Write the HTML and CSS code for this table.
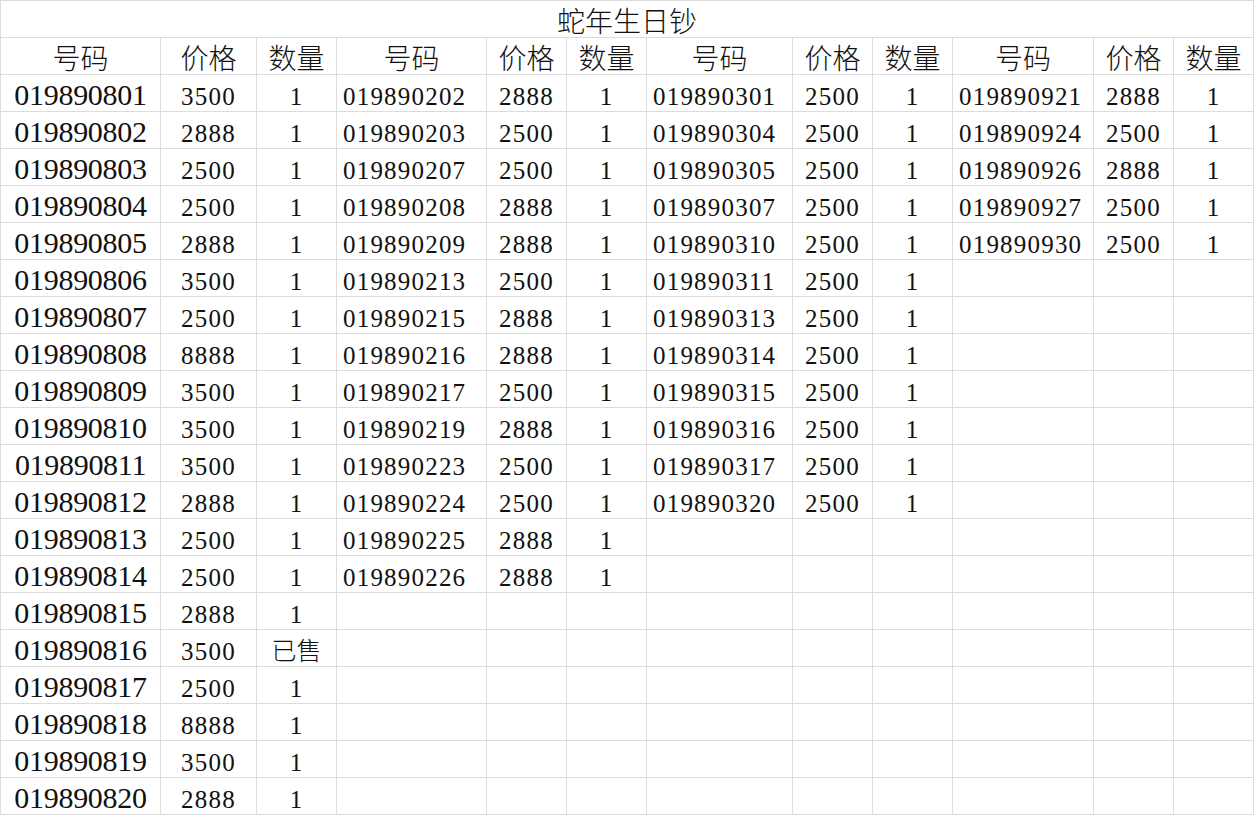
FILE: index.html
```html
<!DOCTYPE html>
<html lang="zh-CN">
<head>
<meta charset="utf-8">
<title>蛇年生日钞</title>
<link rel="stylesheet" href="styles.css">
</head>
<body>
<div class="sheet">
  <div class="title">蛇年生日钞</div>

  <div class="c h">号码</div><div class="c h">价格</div><div class="c h">数量</div>
  <div class="c h">号码</div><div class="c h">价格</div><div class="c h">数量</div>
  <div class="c h">号码</div><div class="c h">价格</div><div class="c h">数量</div>
  <div class="c h">号码</div><div class="c h">价格</div><div class="c h">数量</div>

  <div class="c k1">019890801</div><div class="c v">3500</div><div class="c v">1</div>
  <div class="c k">019890202</div><div class="c v">2888</div><div class="c v">1</div>
  <div class="c k">019890301</div><div class="c v">2500</div><div class="c v">1</div>
  <div class="c k">019890921</div><div class="c v">2888</div><div class="c v">1</div>

  <div class="c k1">019890802</div><div class="c v">2888</div><div class="c v">1</div>
  <div class="c k">019890203</div><div class="c v">2500</div><div class="c v">1</div>
  <div class="c k">019890304</div><div class="c v">2500</div><div class="c v">1</div>
  <div class="c k">019890924</div><div class="c v">2500</div><div class="c v">1</div>

  <div class="c k1">019890803</div><div class="c v">2500</div><div class="c v">1</div>
  <div class="c k">019890207</div><div class="c v">2500</div><div class="c v">1</div>
  <div class="c k">019890305</div><div class="c v">2500</div><div class="c v">1</div>
  <div class="c k">019890926</div><div class="c v">2888</div><div class="c v">1</div>

  <div class="c k1">019890804</div><div class="c v">2500</div><div class="c v">1</div>
  <div class="c k">019890208</div><div class="c v">2888</div><div class="c v">1</div>
  <div class="c k">019890307</div><div class="c v">2500</div><div class="c v">1</div>
  <div class="c k">019890927</div><div class="c v">2500</div><div class="c v">1</div>

  <div class="c k1">019890805</div><div class="c v">2888</div><div class="c v">1</div>
  <div class="c k">019890209</div><div class="c v">2888</div><div class="c v">1</div>
  <div class="c k">019890310</div><div class="c v">2500</div><div class="c v">1</div>
  <div class="c k">019890930</div><div class="c v">2500</div><div class="c v">1</div>

  <div class="c k1">019890806</div><div class="c v">3500</div><div class="c v">1</div>
  <div class="c k">019890213</div><div class="c v">2500</div><div class="c v">1</div>
  <div class="c k">019890311</div><div class="c v">2500</div><div class="c v">1</div>
  <div class="c"></div><div class="c"></div><div class="c"></div>

  <div class="c k1">019890807</div><div class="c v">2500</div><div class="c v">1</div>
  <div class="c k">019890215</div><div class="c v">2888</div><div class="c v">1</div>
  <div class="c k">019890313</div><div class="c v">2500</div><div class="c v">1</div>
  <div class="c"></div><div class="c"></div><div class="c"></div>

  <div class="c k1">019890808</div><div class="c v">8888</div><div class="c v">1</div>
  <div class="c k">019890216</div><div class="c v">2888</div><div class="c v">1</div>
  <div class="c k">019890314</div><div class="c v">2500</div><div class="c v">1</div>
  <div class="c"></div><div class="c"></div><div class="c"></div>

  <div class="c k1">019890809</div><div class="c v">3500</div><div class="c v">1</div>
  <div class="c k">019890217</div><div class="c v">2500</div><div class="c v">1</div>
  <div class="c k">019890315</div><div class="c v">2500</div><div class="c v">1</div>
  <div class="c"></div><div class="c"></div><div class="c"></div>

  <div class="c k1">019890810</div><div class="c v">3500</div><div class="c v">1</div>
  <div class="c k">019890219</div><div class="c v">2888</div><div class="c v">1</div>
  <div class="c k">019890316</div><div class="c v">2500</div><div class="c v">1</div>
  <div class="c"></div><div class="c"></div><div class="c"></div>

  <div class="c k1">019890811</div><div class="c v">3500</div><div class="c v">1</div>
  <div class="c k">019890223</div><div class="c v">2500</div><div class="c v">1</div>
  <div class="c k">019890317</div><div class="c v">2500</div><div class="c v">1</div>
  <div class="c"></div><div class="c"></div><div class="c"></div>

  <div class="c k1">019890812</div><div class="c v">2888</div><div class="c v">1</div>
  <div class="c k">019890224</div><div class="c v">2500</div><div class="c v">1</div>
  <div class="c k">019890320</div><div class="c v">2500</div><div class="c v">1</div>
  <div class="c"></div><div class="c"></div><div class="c"></div>

  <div class="c k1">019890813</div><div class="c v">2500</div><div class="c v">1</div>
  <div class="c k">019890225</div><div class="c v">2888</div><div class="c v">1</div>
  <div class="c"></div><div class="c"></div><div class="c"></div>
  <div class="c"></div><div class="c"></div><div class="c"></div>

  <div class="c k1">019890814</div><div class="c v">2500</div><div class="c v">1</div>
  <div class="c k">019890226</div><div class="c v">2888</div><div class="c v">1</div>
  <div class="c"></div><div class="c"></div><div class="c"></div>
  <div class="c"></div><div class="c"></div><div class="c"></div>

  <div class="c k1">019890815</div><div class="c v">2888</div><div class="c v">1</div>
  <div class="c"></div><div class="c"></div><div class="c"></div>
  <div class="c"></div><div class="c"></div><div class="c"></div>
  <div class="c"></div><div class="c"></div><div class="c"></div>

  <div class="c k1">019890816</div><div class="c v">3500</div><div class="c v cn">已售</div>
  <div class="c"></div><div class="c"></div><div class="c"></div>
  <div class="c"></div><div class="c"></div><div class="c"></div>
  <div class="c"></div><div class="c"></div><div class="c"></div>

  <div class="c k1">019890817</div><div class="c v">2500</div><div class="c v">1</div>
  <div class="c"></div><div class="c"></div><div class="c"></div>
  <div class="c"></div><div class="c"></div><div class="c"></div>
  <div class="c"></div><div class="c"></div><div class="c"></div>

  <div class="c k1">019890818</div><div class="c v">8888</div><div class="c v">1</div>
  <div class="c"></div><div class="c"></div><div class="c"></div>
  <div class="c"></div><div class="c"></div><div class="c"></div>
  <div class="c"></div><div class="c"></div><div class="c"></div>

  <div class="c k1">019890819</div><div class="c v">3500</div><div class="c v">1</div>
  <div class="c"></div><div class="c"></div><div class="c"></div>
  <div class="c"></div><div class="c"></div><div class="c"></div>
  <div class="c"></div><div class="c"></div><div class="c"></div>

  <div class="c k1">019890820</div><div class="c v">2888</div><div class="c v">1</div>
  <div class="c"></div><div class="c"></div><div class="c"></div>
  <div class="c"></div><div class="c"></div><div class="c"></div>
  <div class="c"></div><div class="c"></div><div class="c"></div>
</div>
</body>
</html>
```

FILE: styles.css
```css
html, body {
  margin: 0;
  padding: 0;
  background: #ffffff;
}

body {
  width: 1254px;
  height: 815px;
  overflow: hidden;
  color: #111111;
  font-family: "Liberation Serif", "Noto Sans CJK SC", serif;
}

.sheet {
  display: grid;
  grid-template-columns: 160px 96px 80px 150px 80px 80px 146px 80px 80px 141px 80px 80px;
  grid-auto-rows: 37px;
  border-left: 1px solid #dcdcdc;
  border-top: 1px solid #dcdcdc;
  width: 1253px;
}

.title {
  grid-column: 1 / -1;
  box-sizing: border-box;
  border-right: 1px solid #dcdcdc;
  border-bottom: 1px solid #dcdcdc;
  display: flex;
  align-items: flex-end;
  justify-content: center;
  font-family: "Noto Sans CJK SC", sans-serif;
  font-size: 28px;
  line-height: 1;
  padding-bottom: 3px;
  font-weight: 300;
}

.c {
  box-sizing: border-box;
  border-right: 1px solid #dcdcdc;
  border-bottom: 1px solid #dcdcdc;
  display: flex;
  align-items: flex-end;
  justify-content: center;
  white-space: nowrap;
  overflow: visible;
  font-size: 25px;
  letter-spacing: 1.2px;
  line-height: 26px;
  padding-bottom: 1px;
}

.h {
  font-family: "Noto Sans CJK SC", sans-serif;
  font-size: 28px;
  line-height: 1;
  letter-spacing: 0;
  padding-bottom: 3px;
  font-weight: 300;
}

.k1 {
  font-size: 30px;
  letter-spacing: -0.3px;
  line-height: 30px;
}

.k {
  justify-content: flex-start;
  padding-left: 6px;
}

.cn {
  font-family: "Noto Sans CJK SC", sans-serif;
  font-size: 25px;
  letter-spacing: 0;
  line-height: 1;
  padding-bottom: 4px;
  font-weight: 300;
}
```
